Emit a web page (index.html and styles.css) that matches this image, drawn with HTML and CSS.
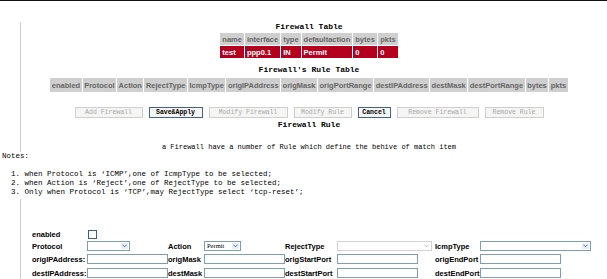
FILE: index.html
```html
<!DOCTYPE html>
<html>
<head>
  <meta charset="UTF-8">
  <title>Firewall</title>
  <link rel="stylesheet" href="styles.css">
</head>
<body>
  <div class="topbar"></div>
  <div class="main">
    <div class="caption">Firewall Table</div>
    <table class="grid fw-table">
      <tr class="head">
        <td class="c-name">name</td>
        <td class="c-if">interface</td>
        <td class="c-type">type</td>
        <td class="c-def">defaultaction</td>
        <td class="c-bytes">bytes</td>
        <td class="c-pkts">pkts</td>
      </tr>
      <tr class="row-sel">
        <td>test</td>
        <td>ppp0.1</td>
        <td>IN</td>
        <td>Permit</td>
        <td>0</td>
        <td>0</td>
      </tr>
    </table>

    <div class="caption rule-caption">Firewall's Rule Table</div>
    <table class="grid rule-table">
      <tr class="head">
        <td>enabled</td>
        <td>Protocol</td>
        <td>Action</td>
        <td>RejectType</td>
        <td>IcmpType</td>
        <td>origIPAddress</td>
        <td>origMask</td>
        <td>origPortRange</td>
        <td>destIPAddress</td>
        <td>destMask</td>
        <td>destPortRange</td>
        <td>bytes</td>
        <td>pkts</td>
      </tr>
    </table>

    <div class="buttons">
      <button class="btn b-add" disabled>Add Firewall</button>
      <button class="btn active b-save">Save&amp;Apply</button>
      <button class="btn b-modfw" disabled>Modify Firewall</button>
      <button class="btn b-modrule" disabled>Modify Rule</button>
      <button class="btn active b-cancel">Cancel</button>
      <button class="btn b-remfw" disabled>Remove Firewall</button>
      <button class="btn b-remrule" disabled>Remove Rule</button>
    </div>
    <div class="caption sub-caption">Firewall Rule</div>
    <div class="desc">a Firewall have a number of Rule which define the behive of match item</div>

    <pre class="notes">Notes:

  1. when Protocol is ‘ICMP’,one of IcmpType to be selected;
  2. when Action is ‘Reject’,one of RejectType to be selected;
  3. Only when Protocol is ‘TCP’,may RejectType select ‘tcp-reset’;</pre>

    <table class="form">
      <colgroup>
        <col class="w1"><col class="w2"><col class="w3"><col class="w4">
        <col class="w5"><col class="w6"><col class="w7"><col class="w8">
      </colgroup>
      <tr class="r-en">
        <td class="lbl">enabled</td>
        <td><span class="check"></span></td>
        <td colspan="6"></td>
      </tr>
      <tr class="r-sel">
        <td class="lbl">Protocol</td>
        <td><span class="sel s-proto"><span class="sel-text"></span><span class="arrow"><svg width="5" height="4" viewBox="0 0 5 4"><path d="M0.5 0.8 L2.5 2.8 L4.5 0.8" fill="none" stroke="#4a6ea8" stroke-width="1"/></svg></span></span></td>
        <td class="lbl">Action</td>
        <td><span class="sel s-action"><span class="sel-text">Permit</span><span class="arrow"><svg width="5" height="4" viewBox="0 0 5 4"><path d="M0.5 0.8 L2.5 2.8 L4.5 0.8" fill="none" stroke="#4a6ea8" stroke-width="1"/></svg></span></span></td>
        <td class="lbl">RejectType</td>
        <td><span class="sel s-reject disabled"><span class="sel-text"></span><span class="arrow"><svg width="5" height="4" viewBox="0 0 5 4"><path d="M0.5 0.8 L2.5 2.8 L4.5 0.8" fill="none" stroke="#c0c0c0" stroke-width="1"/></svg></span></span></td>
        <td class="lbl">IcmpType</td>
        <td><span class="sel s-icmp"><span class="sel-text"></span><span class="arrow"><svg width="5" height="4" viewBox="0 0 5 4"><path d="M0.5 0.8 L2.5 2.8 L4.5 0.8" fill="none" stroke="#4a6ea8" stroke-width="1"/></svg></span></span></td>
      </tr>
      <tr class="r-in">
        <td class="lbl">origIPAddress:</td>
        <td><input class="txt" type="text"></td>
        <td class="lbl">origMask</td>
        <td><input class="txt" type="text"></td>
        <td class="lbl">origStartPort</td>
        <td><input class="txt" type="text"></td>
        <td class="lbl">origEndPort</td>
        <td><input class="txt" type="text"></td>
      </tr>
      <tr class="r-in">
        <td class="lbl">destIPAddress:</td>
        <td><input class="txt" type="text"></td>
        <td class="lbl">destMask</td>
        <td><input class="txt" type="text"></td>
        <td class="lbl">destStartPort</td>
        <td><input class="txt" type="text"></td>
        <td class="lbl">destEndPort</td>
        <td><input class="txt" type="text"></td>
      </tr>
    </table>
  </div>
</body>
</html>
```

FILE: styles.css
```css
body {
  margin: 0;
  background: #fff;
  color: #000;
  font-family: "Liberation Sans", Arial, sans-serif;
}
.topbar {
  height: 1px;
  background: #111;
}
.main {
  margin: 21px 10px 0 20px;
  border-left: 1px solid #c9d0e2;
  padding-bottom: 10px;
}
.caption {
  font-family: "Liberation Mono", monospace;
  font-weight: bold;
  font-size: 8px;
  line-height: 10px;
  text-align: center;
}
.grid {
  margin: 0 auto;
  border-collapse: separate;
  border-spacing: 1px;
  font-size: 7.5px;
  font-weight: bold;
}
.grid td {
  padding: 0 2px;
  white-space: nowrap;
}
.fw-table tr {
  height: 12px;
}
.head td {
  background: #cfcfcf;
  color: #666;
}
.row-sel td {
  background: #b4001e;
  color: #fff;
}
.c-name { width: 19px; }
.c-if { width: 31px; }
.c-type { width: 15px; }
.c-def { width: 46px; }
.c-bytes { width: 20px; }
.c-pkts { width: 15px; }
.rule-caption {
  margin-top: 6px;
}
.rule-table {
  margin-top: 2px;
}
.rule-table td {
  padding: 0 1.5px;
}
.rule-table tr {
  height: 14px;
}
.buttons {
  display: flex;
  justify-content: center;
  gap: 6px;
  margin-top: 14px;
}
.btn {
  height: 11px;
  padding: 0;
  border: 1px solid #cfcfcf;
  background: #f5f5f3;
  color: #a8a8a8;
  font-family: "Liberation Mono", monospace;
  font-size: 6.5px;
  line-height: 9px;
}
.btn.active {
  border-color: #45618e;
  color: #000;
  font-weight: bold;
}
.b-add { width: 68px; }
.b-save { width: 54px; }
.b-modfw { width: 79px; }
.b-modrule { width: 58px; }
.b-cancel { width: 33px; }
.b-remfw { width: 82px; }
.b-remrule { width: 59px; }
.sub-caption {
  margin-top: 2px;
}
.desc {
  margin-top: 12px;
  font-family: "Liberation Mono", monospace;
  font-size: 7px;
  line-height: 10px;
  text-align: center;
}
.notes {
  margin: 0 0 0 -19px;
  background: #fff;
  font-family: "Liberation Mono", monospace;
  font-size: 7.5px;
  line-height: 9px;
  padding-bottom: 2px;
}
.form {
  margin: 29px 0 0 11px;
  border-collapse: collapse;
  table-layout: fixed;
  font-size: 7.5px;
  font-weight: bold;
}
.form td {
  padding: 0;
  white-space: nowrap;
  vertical-align: middle;
}
.w1 { width: 55px; }
.w2 { width: 80px; }
.w3 { width: 36px; }
.w4 { width: 80px; }
.w5 { width: 52px; }
.w6 { width: 98px; }
.w7 { width: 43px; }
.w8 { width: 115px; }
.r-en { height: 12px; }
.r-sel { height: 12px; }
.r-in { height: 14px; }
.check {
  display: block;
  width: 7px;
  height: 7px;
  margin-left: 1px;
  border: 1px solid #3b5f86;
  background: #fff;
}
.sel {
  position: relative;
  display: block;
  height: 8px;
  border: 1px solid #7f9db9;
  background: #fff;
}
.sel.disabled {
  border-color: #d4d4d4;
}
.sel-text {
  display: block;
  padding-left: 2px;
  font-family: "Liberation Serif", serif;
  font-weight: normal;
  font-size: 6.5px;
  line-height: 8px;
}
.arrow {
  position: absolute;
  top: 1px;
  right: 1px;
  width: 7px;
  height: 6px;
  display: flex;
  align-items: center;
  justify-content: center;
  background: #e6eefc;
}
.sel.disabled .arrow {
  background: #fff;
}
.s-proto { width: 41px; }
.s-action { width: 35px; }
.s-reject { width: 93px; }
.s-icmp { width: 109px; }
.txt {
  display: block;
  box-sizing: border-box;
  width: 81px;
  height: 10px;
  margin: 0;
  padding: 0;
  border: 1px solid #7f9db9;
}
```
